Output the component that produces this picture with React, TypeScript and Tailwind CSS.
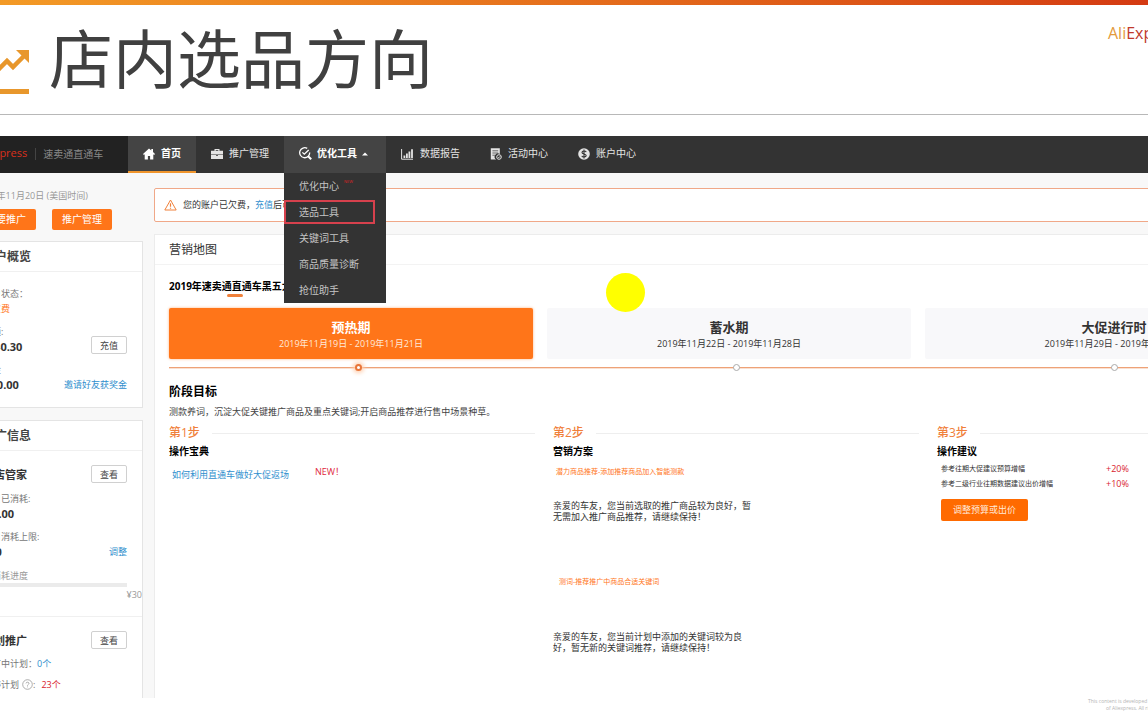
import type React from "react"

const navIcons = {
  home: (
    <svg width="12" height="12" viewBox="0 0 12 12" fill="currentColor">
      <path d="M6 0.4 L0 6 L0.9 6.9 L1.7 6.2 V11.6 H4.9 V8 H7.1 V11.6 H10.3 V6.2 L11.1 6.9 L12 6 L10 4.1 V1 H8.3 V2.5 Z" />
    </svg>
  ),
  briefcase: (
    <svg width="12" height="12" viewBox="0 0 12 12" fill="currentColor">
      <path d="M3.5 2.8 V1 H8.5 V2.8 H12 V6.4 H0 V2.8 Z M4.7 2.8 H7.3 V2 H4.7 Z" fillRule="evenodd" />
      <path d="M0 7 H5 V7.8 H7 V7 H12 V11 H0 Z" />
    </svg>
  ),
  search: (
    <svg width="13" height="13" viewBox="0 0 13 13" fill="none" stroke="currentColor" strokeWidth="1.3">
      <path d="M10.7 5.6 A5 5 0 1 1 8.2 1.4" />
      <path d="M8.9 9 L12.2 12.3" strokeWidth="2" />
      <path d="M3.4 5.4 L5.3 7.2 L9.7 3" />
    </svg>
  ),
  chart: (
    <svg width="13" height="12" viewBox="0 0 13 12" fill="none" stroke="currentColor">
      <path d="M0.6 1 V11.2 H12" strokeWidth="1" />
      <path d="M3.4 10 V7.4 M5.9 10 V5.6 M8.4 10 V3.6 M11 10 V1.2" strokeWidth="1.8" />
    </svg>
  ),
  activity: (
    <svg width="12" height="12" viewBox="0 0 12 12" fill="none">
      <path d="M0.8 0.3 H9.8 V6 A3.2 3.2 0 0 0 6.2 11.6 H0.8 Z" fill="currentColor" />
      <path d="M2.4 2.8 H8.2 M2.4 5 H8.2 M2.4 7.2 H5.4" stroke="#333" strokeWidth="0.7" />
      <circle cx="9" cy="9" r="2.3" stroke="currentColor" />
      <path d="M8 9 L8.8 9.8 L10.2 8.2" stroke="currentColor" strokeWidth="0.8" />
    </svg>
  ),
  account: (
    <svg width="12" height="12" viewBox="0 0 12 12" fill="none">
      <circle cx="6" cy="6" r="5.8" fill="currentColor" />
      <path
        d="M8.2 4.1 C7.7 2.7 4 2.6 4 4.5 C4 6.3 8.2 5.6 8.2 7.6 C8.2 9.5 4.2 9.3 3.8 7.8 M6 1.6 V10.4"
        stroke="#333"
        strokeWidth="1.1"
      />
    </svg>
  ),
}

const toolMenu = ["优化中心", "选品工具", "关键词工具", "商品质量诊断", "抢位助手"]

const phases = [
  { name: "预热期", range: "2019年11月19日 - 2019年11月21日", active: true },
  { name: "蓄水期", range: "2019年11月22日 - 2019年11月28日", active: false },
  { name: "大促进行时", range: "2019年11月29日 - 2019年12月2日", active: false },
]

const advice = [
  { label: "参考往期大促建议预算增幅", value: "+20%" },
  { label: "参考二级行业往期数据建议出价增幅", value: "+10%" },
]

function SlideHeader() {
  return (
    <header>
      <div className="h-[5px] bg-linear-to-r from-[#f39a26] to-[#d43a12]" />
      <div className="h-[110px] flex justify-between border-b border-[#b8b8b8]">
        <div className="flex">
          <svg width="30" height="50" viewBox="0 0 30 50" className="mt-[43px] text-[#e8972c]">
            <path d="M-6 27 L-1 21 L7 13 L13 19 L24 8" fill="none" stroke="currentColor" strokeWidth="4.5" />
            <path d="M16 2 H29 V15 Z" fill="currentColor" />
            <rect x="0" y="41" width="29" height="5" fill="currentColor" />
          </svg>
          <h1 className="ml-[19px] mt-[10px] text-[64px] leading-[80px] text-[#404040] whitespace-nowrap font-['Noto_Sans_CJK_SC',sans-serif]">
            店内选品方向
          </h1>
        </div>
        <div className="w-10 mt-[18px] text-[16px] leading-5 text-[#c0392b] whitespace-nowrap">
          <span className="text-[#e39a3b]">Ali</span>Express
        </div>
      </div>
    </header>
  )
}

function NavTab({ icon, children }: { icon: React.ReactNode; children: React.ReactNode }) {
  return (
    <a href="#" className="flex items-center gap-[6px] px-[15px] pb-[2px]">
      {icon}
      {children}
    </a>
  )
}

function NavBar() {
  return (
    <nav className="relative z-10 mt-[21px] -ml-8 h-[37px] flex bg-[#333] text-[10px] text-[#e4e4e4] whitespace-nowrap">
      <div className="w-40 pl-[7px] pb-[2px] flex items-center bg-[#222]">
        <span className="text-[11px] text-[#d8301c]">AliExpress</span>
        <span className="ml-2 pl-[7px] h-3 leading-3 border-l border-[#444] text-[#888]">速卖通直通车</span>
      </div>
      <a
        href="#"
        className="flex items-center gap-[6px] px-[15px] bg-[#444] border-b-2 border-[#f0952c] font-bold text-white"
      >
        {navIcons.home}
        首页
      </a>
      <NavTab icon={navIcons.briefcase}>推广管理</NavTab>
      <div className="relative w-[102px] flex bg-[#444]">
        <button type="button" className="flex items-center gap-[5px] pl-[15px] pb-[2px] font-bold text-white">
          {navIcons.search}
          优化工具
          <svg width="6" height="4" viewBox="0 0 6 4" fill="currentColor">
            <path d="M0 3.6 L3 0.4 L6 3.6 Z" />
          </svg>
        </button>
        <ul className="absolute left-0 top-full w-full bg-[#333] text-[#c4c4c4]">
          {toolMenu.map((item) => (
            <li key={item} className="h-[26px] flex items-center">
              <a
                href="#"
                className={
                  item === "选品工具"
                    ? "w-[91px] h-6 flex items-center border-2 border-[#d6414d] pl-[13px]"
                    : "flex items-start pl-[15px]"
                }
              >
                {item}
                {item === "优化中心" && <span className="ml-[5px] text-[4px] leading-[6px] text-[#d22]">NEW</span>}
              </a>
            </li>
          ))}
        </ul>
      </div>
      <NavTab icon={navIcons.chart}>数据报告</NavTab>
      <NavTab icon={navIcons.activity}>活动中心</NavTab>
      <NavTab icon={navIcons.account}>账户中心</NavTab>
    </nav>
  )
}

function OutlineButton({ children }: { children: React.ReactNode }) {
  return (
    <button
      type="button"
      className="w-9 h-[18px] flex items-center justify-center rounded-xs border border-[#d0d0d0] bg-white text-[9px] leading-none text-[#444]"
    >
      {children}
    </button>
  )
}

function Stat({ label, value, action }: { label: string; value: string; action?: React.ReactNode }) {
  return (
    <div className="mt-2 flex items-end justify-between">
      <div>
        <div>{label}</div>
        <div className="text-[11px] font-bold text-[#333]">{value}</div>
      </div>
      {action}
    </div>
  )
}

function Sidebar() {
  return (
    <aside className="w-[175px] shrink-0 pt-[15px] text-[9px] leading-[15px] text-[#777] whitespace-nowrap">
      <div className="pl-2">
        <div className="text-[#999]">2019年11月20日 (美国时间)</div>
        <div className="mt-[6px] flex gap-4">
          <button type="button" className="w-[60px] h-[21px] rounded-xs bg-[#ff7519] text-[10px] text-white">
            我要推广
          </button>
          <button type="button" className="w-[60px] h-[21px] rounded-xs bg-[#ff7519] text-[10px] text-white">
            推广管理
          </button>
        </div>
      </div>

      <section className="mt-[11px] border border-[#e4e4e4] bg-white">
        <h2 className="h-[30px] px-[14px] border-b border-[#f0f0f0] text-[12px] leading-[30px] font-bold text-[#444]">
          账户概览
        </h2>
        <div className="pl-[14px] pr-[15px] pt-[14px] pb-[15px]">
          <div>账户状态：</div>
          <div className="text-[#ff7519]">已欠费</div>
          <Stat label="余额:" value="￥ -0.30" action={<OutlineButton>充值</OutlineButton>} />
          <Stat
            label="赠金"
            value="￥ 0.00"
            action={
              <a href="#" className="text-[#2f8fce]">
                邀请好友获奖金
              </a>
            }
          />
        </div>
      </section>

      <section className="mt-3 border border-b-0 border-[#e4e4e4] bg-white pb-[6px]">
        <h2 className="h-[30px] px-[14px] border-b border-[#f0f0f0] text-[12px] leading-[30px] font-bold text-[#444]">
          推广信息
        </h2>
        <div className="pl-[14px] pr-[15px] pt-[14px] h-[166px] border-b border-[#f0f0f0]">
          <div className="flex items-center justify-between">
            <h3 className="text-[11px] font-bold text-[#333]">全店管家</h3>
            <OutlineButton>查看</OutlineButton>
          </div>
          <Stat label="今日已消耗:" value="¥ 0.00" />
          <Stat
            label="今日消耗上限:"
            value="¥30"
            action={
              <a href="#" className="text-[#2f8fce]">
                调整
              </a>
            }
          />
          <div className="mt-[9px] text-[#999]">日消耗进度</div>
          <div className="h-1 bg-[#ebebeb]" />
          <div className="-mr-[15px] text-right text-[#999]">¥30</div>
        </div>
        <div className="pl-[14px] pr-[15px] pt-[14px]">
          <div className="flex items-center justify-between">
            <h3 className="text-[11px] font-bold text-[#333]">计划推广</h3>
            <OutlineButton>查看</OutlineButton>
          </div>
          <div className="mt-[7px] flex">
            推广中计划：<span className="text-[#2f8fce]">0个</span>
          </div>
          <div className="mt-[6px] flex items-center">
            暂停计划
            <svg width="11" height="11" viewBox="0 0 11 11" fill="none" stroke="#999" className="ml-[3px]">
              <circle cx="5.5" cy="5.5" r="4.8" strokeWidth="0.8" />
              <path d="M4 4.4 C4 2.8 7 2.8 7 4.4 C7 5.4 5.5 5.4 5.5 6.7 M5.5 7.5 V8.3" strokeWidth="0.8" />
            </svg>
            :<span className="ml-[6px] text-[#d9232e]">23个</span>
          </div>
        </div>
      </section>
    </aside>
  )
}

function Timeline() {
  return (
    <div>
      <ol className="grid grid-cols-3">
        {phases.map((phase) => (
          <li
            key={phase.name}
            className={
              phase.active
                ? "mr-[14px] last:mr-0 h-[51px] pt-[11px] rounded-xs bg-[#ff7519] text-center text-[#ffe9da] shadow-[0_0_3px_#ffb380]"
                : "mr-[14px] last:mr-0 h-[51px] pt-[11px] rounded-xs bg-[#f8f8fa] text-center text-[#333]"
            }
          >
            <div className={phase.active ? "text-[13px] leading-[17px] font-bold text-white" : "text-[13px] leading-[17px] font-bold"}>
              {phase.name}
            </div>
            <div className="text-[9px] leading-[15px]">{phase.range}</div>
          </li>
        ))}
      </ol>
      <div className="mt-[5px] h-[7px] grid grid-cols-3 items-center bg-linear-to-b from-transparent from-[3px] via-[#e8834a] via-[3px] to-transparent to-[5px]">
        {phases.map((phase) => (
          <span
            key={phase.name}
            className={
              phase.active
                ? "mx-auto size-[7px] rounded-full border-2 border-[#e8763a] bg-white shadow-[0_0_4px_2px_#ffd0b0]"
                : "mx-auto size-[7px] rounded-full border border-[#aaa] bg-white"
            }
          />
        ))}
      </div>
    </div>
  )
}

function Step({ step, title, children }: { step: string; title: string; children: React.ReactNode }) {
  return (
    <section>
      <div className="flex items-center gap-3 text-[12px] leading-4 font-medium text-[#f0803a]">
        {step}
        <span className="h-px flex-1 bg-[#eee]" />
      </div>
      <h4 className="mt-[3px] text-[10px] leading-[14px] font-bold text-black">{title}</h4>
      {children}
    </section>
  )
}

function MarketingMap() {
  return (
    <section className="mt-3 flex-1 border border-b-0 border-[#ececec] bg-white">
      <h2 className="h-[30px] px-[14px] border-b border-[#f3f3f3] text-[12px] leading-[30px] text-[#333]">营销地图</h2>
      <div className="px-[14px] pt-[14px]">
        <div className="w-fit flex flex-col items-center">
          <h3 className="text-[10px] leading-[15px] font-bold text-black">2019年速卖通直通车黑五大促</h3>
          <span className="w-4 h-[3px] rounded-full bg-[#f0803a]" />
        </div>
        <div className="mt-[11px]">
          <Timeline />
        </div>
        <h3 className="mt-[13px] text-[12px] leading-4 font-bold text-black">阶段目标</h3>
        <p className="mt-1 text-[9px] leading-[15px] text-[#444]">
          测款养词，沉淀大促关键推广商品及重点关键词;开启商品推荐进行售中场景种草。
        </p>

        <div className="mt-[6px] grid grid-cols-3 gap-[18px] text-[9px]">
          <Step step="第1步" title="操作宝典">
            <div className="mt-[7px] pl-[3px] flex items-start gap-[26px] leading-[14px]">
              <a href="#" className="pt-[3px] text-[#2f8fce]">
                如何利用直通车做好大促返场
              </a>
              <span className="text-[#e0283c]">NEW！</span>
            </div>
          </Step>

          <Step step="第2步" title="营销方案">
            <a href="#" className="block mt-2 ml-[3px] text-[7px] leading-3 text-[#ff7519]">
              潜力商品推荐-添加推荐商品加入智能测款
            </a>
            <p className="mt-[22px] w-[200px] leading-[11px] text-[#333]">
              亲爱的车友，您当前选取的推广商品较为良好，暂无需加入推广商品推荐，请继续保持！
            </p>
            <a href="#" className="block mt-[54px] ml-[6px] text-[7px] leading-3 text-[#ff7519]">
              测词-推荐推广中商品合适关键词
            </a>
            <p className="mt-[43px] w-[200px] leading-[11px] text-[#333]">
              亲爱的车友，您当前计划中添加的关键词较为良好，暂无新的关键词推荐，请继续保持！
            </p>
          </Step>

          <Step step="第3步" title="操作建议">
            <dl className="mt-[3px] pl-1">
              {advice.map((row) => (
                <div key={row.label} className="flex items-center leading-[15px]">
                  <dt className="w-[165px] text-[7px] text-[#333]">{row.label}</dt>
                  <dd className="text-[#d9232e]">{row.value}</dd>
                </div>
              ))}
            </dl>
            <button type="button" className="mt-2 ml-1 w-[87px] h-[22px] rounded-xs bg-[#ff6a00] text-[9px] text-[#ffe9da]">
              调整预算或出价
            </button>
          </Step>
        </div>
      </div>
    </section>
  )
}

export default function App() {
  return (
    <div className="relative overflow-hidden bg-white font-['Open_Sans','Noto_Sans_CJK_SC',sans-serif]">
      <SlideHeader />
      <NavBar />
      <div className="-ml-8 -mr-[170px] flex gap-[11px] bg-[#f8f8f8]">
        <Sidebar />
        <main className="flex-1 pt-[15px] flex flex-col">
          <div className="h-[34px] flex items-center pl-[9px] rounded-xs border border-[#f0a888] bg-white text-[9px] text-[#333] whitespace-nowrap">
            <svg width="13" height="12" viewBox="0 0 13 12" fill="none" stroke="#f0803a" className="mr-[6px]">
              <path d="M6.5 1 L12.2 11 H0.8 Z" strokeLinejoin="round" />
              <path d="M6.5 4.2 V7.8 M6.5 8.7 V9.8" strokeWidth="1.2" />
            </svg>
            您的账户已欠费，
            <a href="#" className="text-[#2f8fce]">
              充值
            </a>
            后可
          </div>
          <MarketingMap />
        </main>
      </div>
      <footer className="h-[19px] flex justify-end text-[5px] leading-[7px] text-[#b4b4b4] whitespace-nowrap">
        <div className="w-15">
          <div>This content is developed</div>
          <div className="pl-[18px]">of Aliexpress. All rights</div>
        </div>
      </footer>

      {/* Pointer highlight */}
      <div className="absolute z-20 left-[606px] top-[273px] size-[39px] rounded-full bg-[#ffff00]" />
    </div>
  )
}
